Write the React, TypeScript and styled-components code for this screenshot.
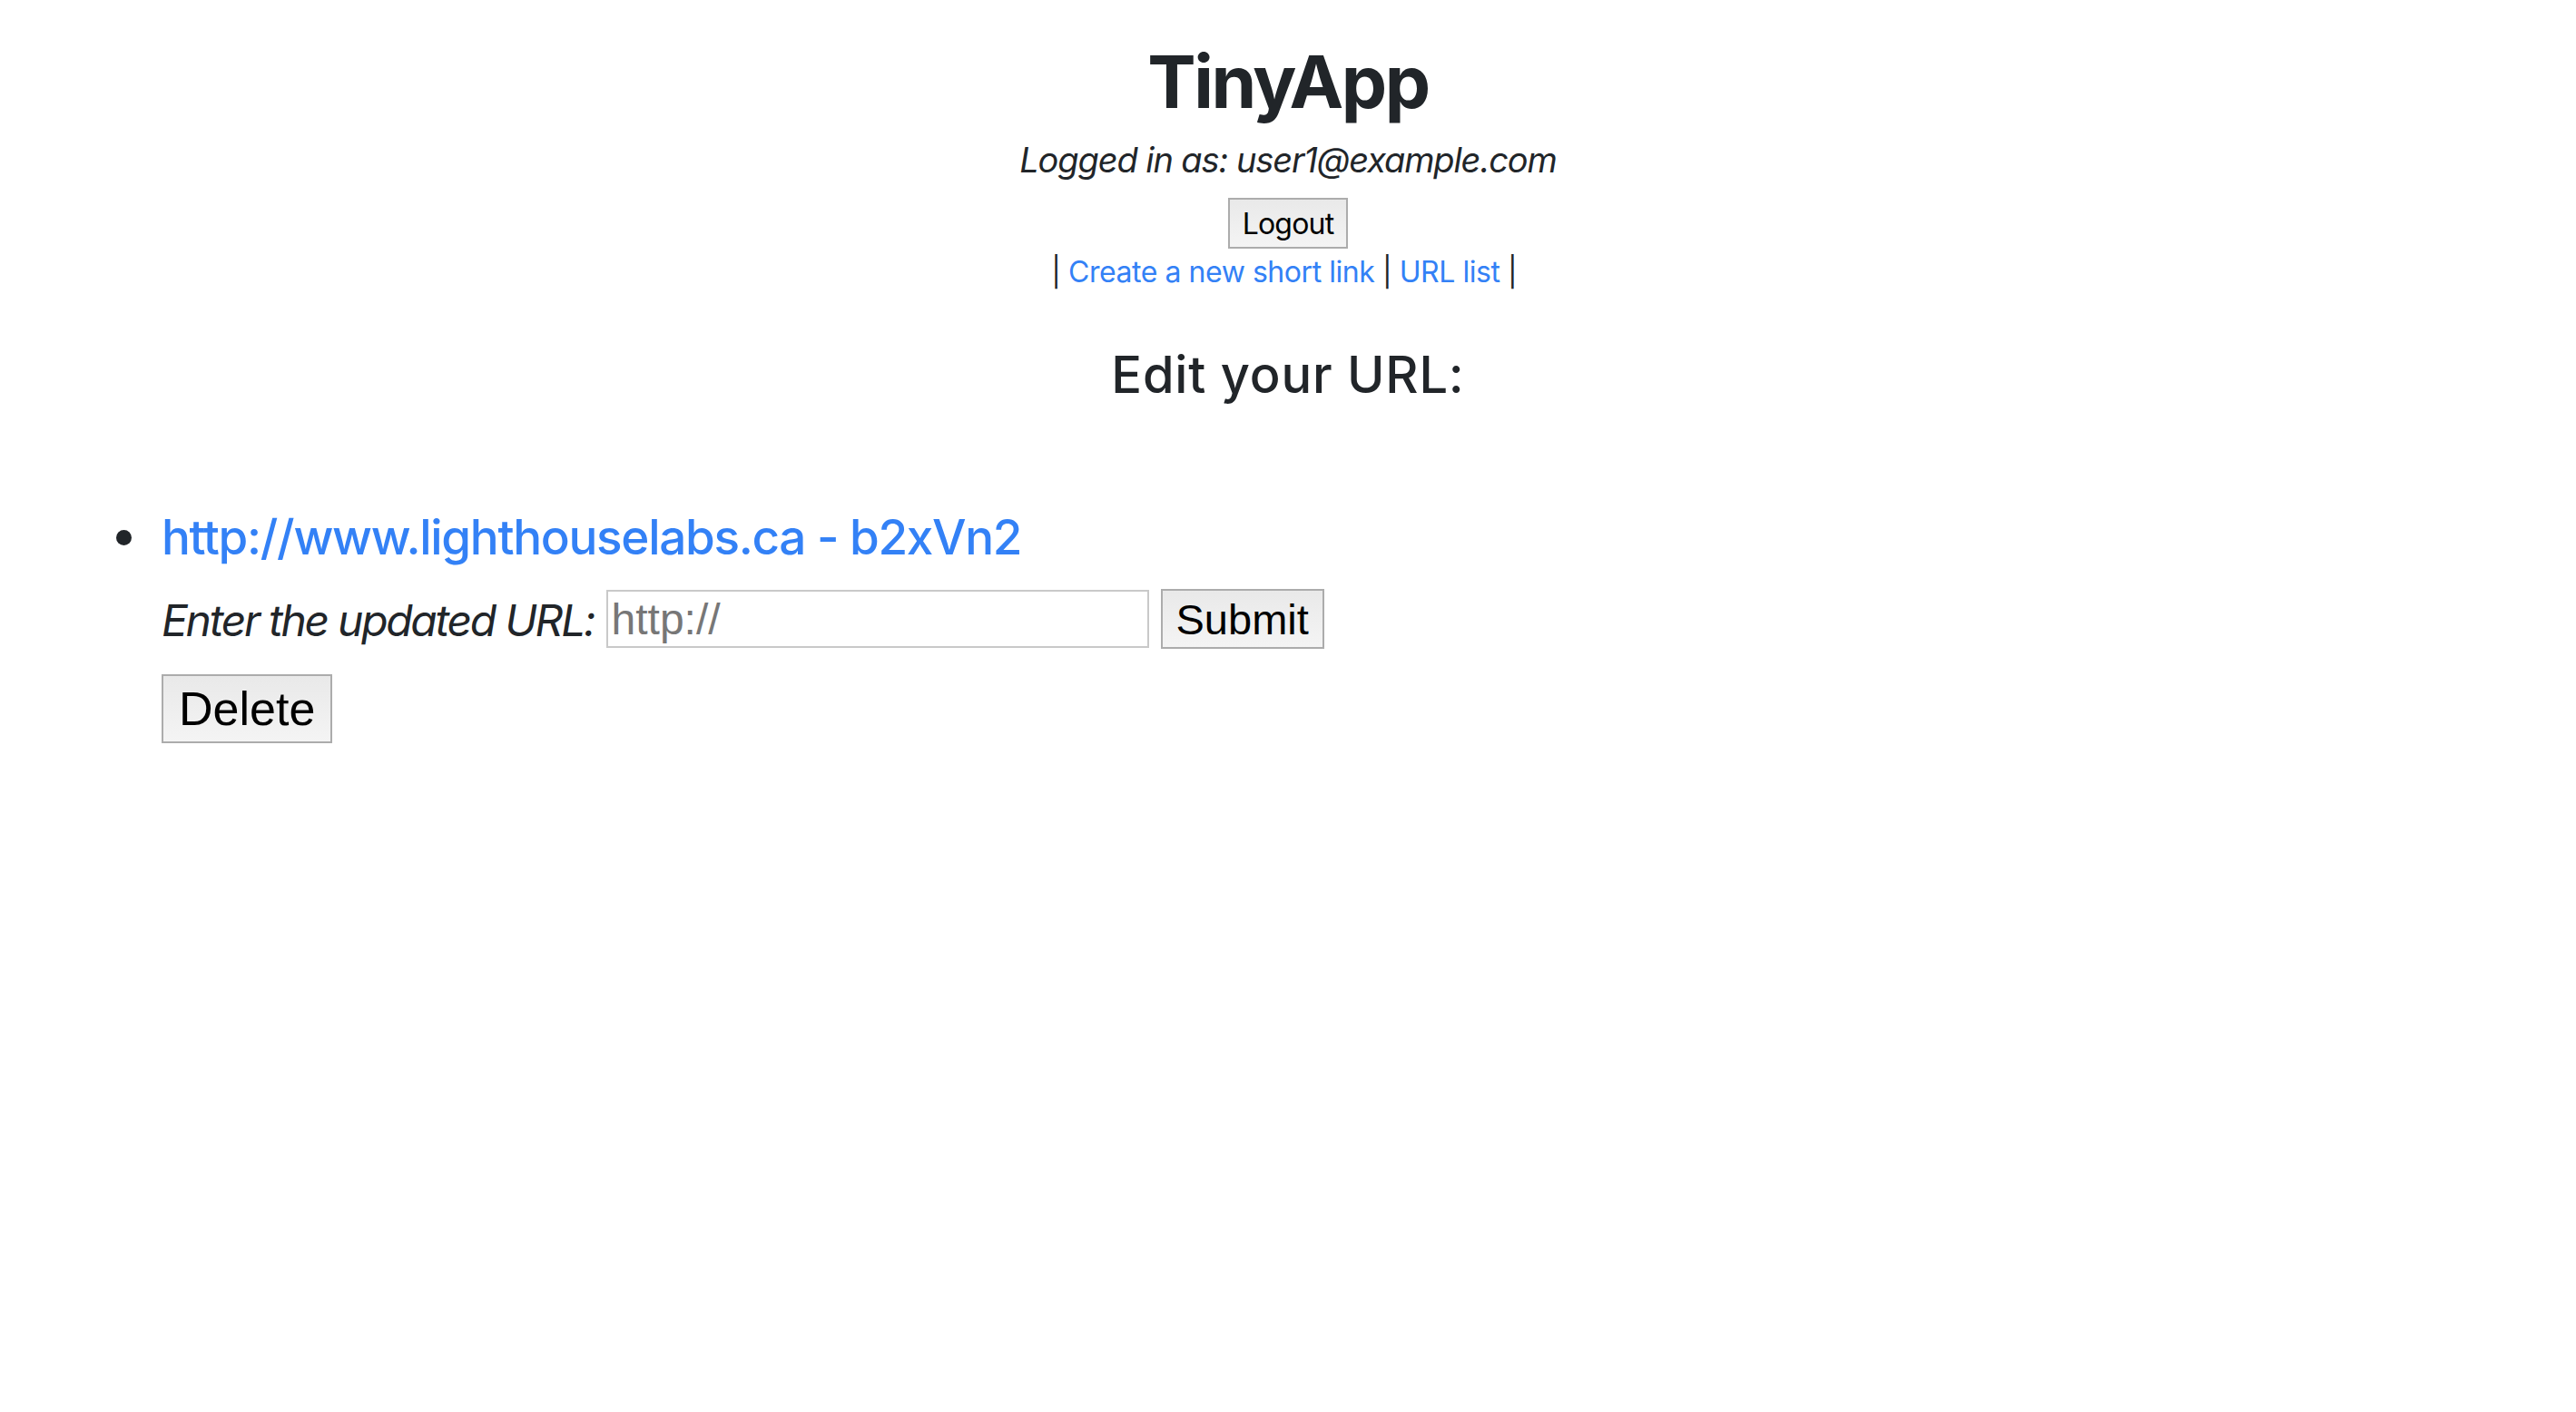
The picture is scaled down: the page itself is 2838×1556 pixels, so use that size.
import React from "react";
import styled, { createGlobalStyle } from "styled-components";

const GlobalStyle = createGlobalStyle`
  html, body {
    margin: 0;
    padding: 0;
    background: #ffffff;
  }
  body {
    font-family: Inter, "Noto Sans", Roboto, "Liberation Sans", sans-serif;
    color: #212529;
  }
`;

const Page = styled.div`
  padding-top: 42px;
  min-height: 1514px;
`;

const Header = styled.header`
  display: flex;
  flex-direction: column;
  align-items: center;
`;

const Title = styled.h1`
  margin: 0;
  font-size: 80px;
  line-height: 96px;
  font-weight: 700;
  letter-spacing: -2.5px;
`;

const LoggedIn = styled.p`
  margin: 14px 0 0;
  font-size: 38px;
  line-height: 48px;
  font-style: italic;
  letter-spacing: -1.1px;
`;

const NativeButton = styled.button<{ $size: number; $height: number; $pad: number; $family: string }>`
  box-sizing: border-box;
  height: ${(p) => p.$height}px;
  padding: 0 ${(p) => p.$pad}px;
  font-family: ${(p) => p.$family};
  font-size: ${(p) => p.$size}px;
  color: #000000;
  background: linear-gradient(#e9e9e9, #f4f4f4);
  border: 2px solid #acacac;
  border-radius: 0;
  cursor: pointer;
`;

const LogoutButton = styled(NativeButton)`
  margin-top: 18px;
  letter-spacing: -0.8px;
`;

const NavLine = styled.nav`
  margin-top: 7px;
  font-size: 32px;
  line-height: 38px;
  letter-spacing: -0.45px;
  white-space: pre;
`;

const NavLink = styled.a`
  color: #3381f6;
  text-decoration: none;
`;

const SectionTitle = styled.h3`
  margin: 61px 0 0;
  font-size: 56px;
  line-height: 67px;
  font-weight: 500;
  letter-spacing: 0.8px;
`;

const UrlList = styled.ul`
  list-style: none;
  margin: 112px 0 0;
  padding: 0 0 0 128px;
`;

const UrlItem = styled.li`
  display: flex;
  flex-direction: column;
`;

const ItemHead = styled.div`
  display: flex;
  align-items: center;
`;

const Bullet = styled.span`
  width: 17px;
  height: 17px;
  border-radius: 50%;
  background: #212529;
  margin-right: 33px;
  flex-shrink: 0;
`;

const UrlLink = styled.a`
  font-size: 53px;
  line-height: 67px;
  font-weight: 500;
  color: #3381f6;
  text-decoration: none;
  letter-spacing: -1.3px;
`;

const ItemBody = styled.div`
  padding-left: 50px;
  display: flex;
  flex-direction: column;
  align-items: flex-start;
`;

const EditForm = styled.form`
  margin-top: 23px;
  display: flex;
  align-items: center;
  height: 66px;
`;

const Label = styled.label`
  font-size: 48px;
  line-height: 58px;
  font-style: italic;
  letter-spacing: -2.3px;
  margin: 4px 13px 0 0;
`;

const UrlInput = styled.input`
  box-sizing: border-box;
  width: 598px;
  height: 64px;
  padding: 0 4px;
  border: 2px solid #c9c9c9;
  font-family: "Liberation Sans", Arial, sans-serif;
  font-size: 48px;
  color: #000;
  outline: none;
  margin-right: 13px;
  &::placeholder {
    color: #777777;
  }
`;

const DeleteForm = styled.form`
  margin-top: 28px;
`;

export default function App() {
  return (
    <Page>
      <GlobalStyle />
      <Header>
        <Title>TinyApp</Title>
        <LoggedIn>Logged in as: user1@example.com</LoggedIn>
        <LogoutButton type="button" $size={32} $height={56} $pad={14} $family={'Inter, "Noto Sans", sans-serif'}>
          Logout
        </LogoutButton>
        <NavLine>
          {"| "}
          <NavLink href="#">Create a new short link</NavLink>
          {" | "}
          <NavLink href="#">URL list</NavLink>
          {" | "}
        </NavLine>
        <SectionTitle>Edit your URL:</SectionTitle>
      </Header>
      <UrlList>
        <UrlItem>
          <ItemHead>
            <Bullet />
            <UrlLink href="#">http://www.lighthouselabs.ca - b2xVn2</UrlLink>
          </ItemHead>
          <ItemBody>
            <EditForm onSubmit={(e) => e.preventDefault()}>
              <Label htmlFor="longURL">Enter the updated URL:</Label>
              <UrlInput id="longURL" type="text" placeholder="http://" />
              <NativeButton type="submit" $size={47} $height={66} $pad={15} $family={'"Liberation Sans", Arial, sans-serif'}>
                Submit
              </NativeButton>
            </EditForm>
            <DeleteForm onSubmit={(e) => e.preventDefault()}>
              <NativeButton type="submit" $size={52} $height={76} $pad={17} $family={'"Liberation Sans", Arial, sans-serif'}>
                Delete
              </NativeButton>
            </DeleteForm>
          </ItemBody>
        </UrlItem>
      </UrlList>
    </Page>
  );
}
